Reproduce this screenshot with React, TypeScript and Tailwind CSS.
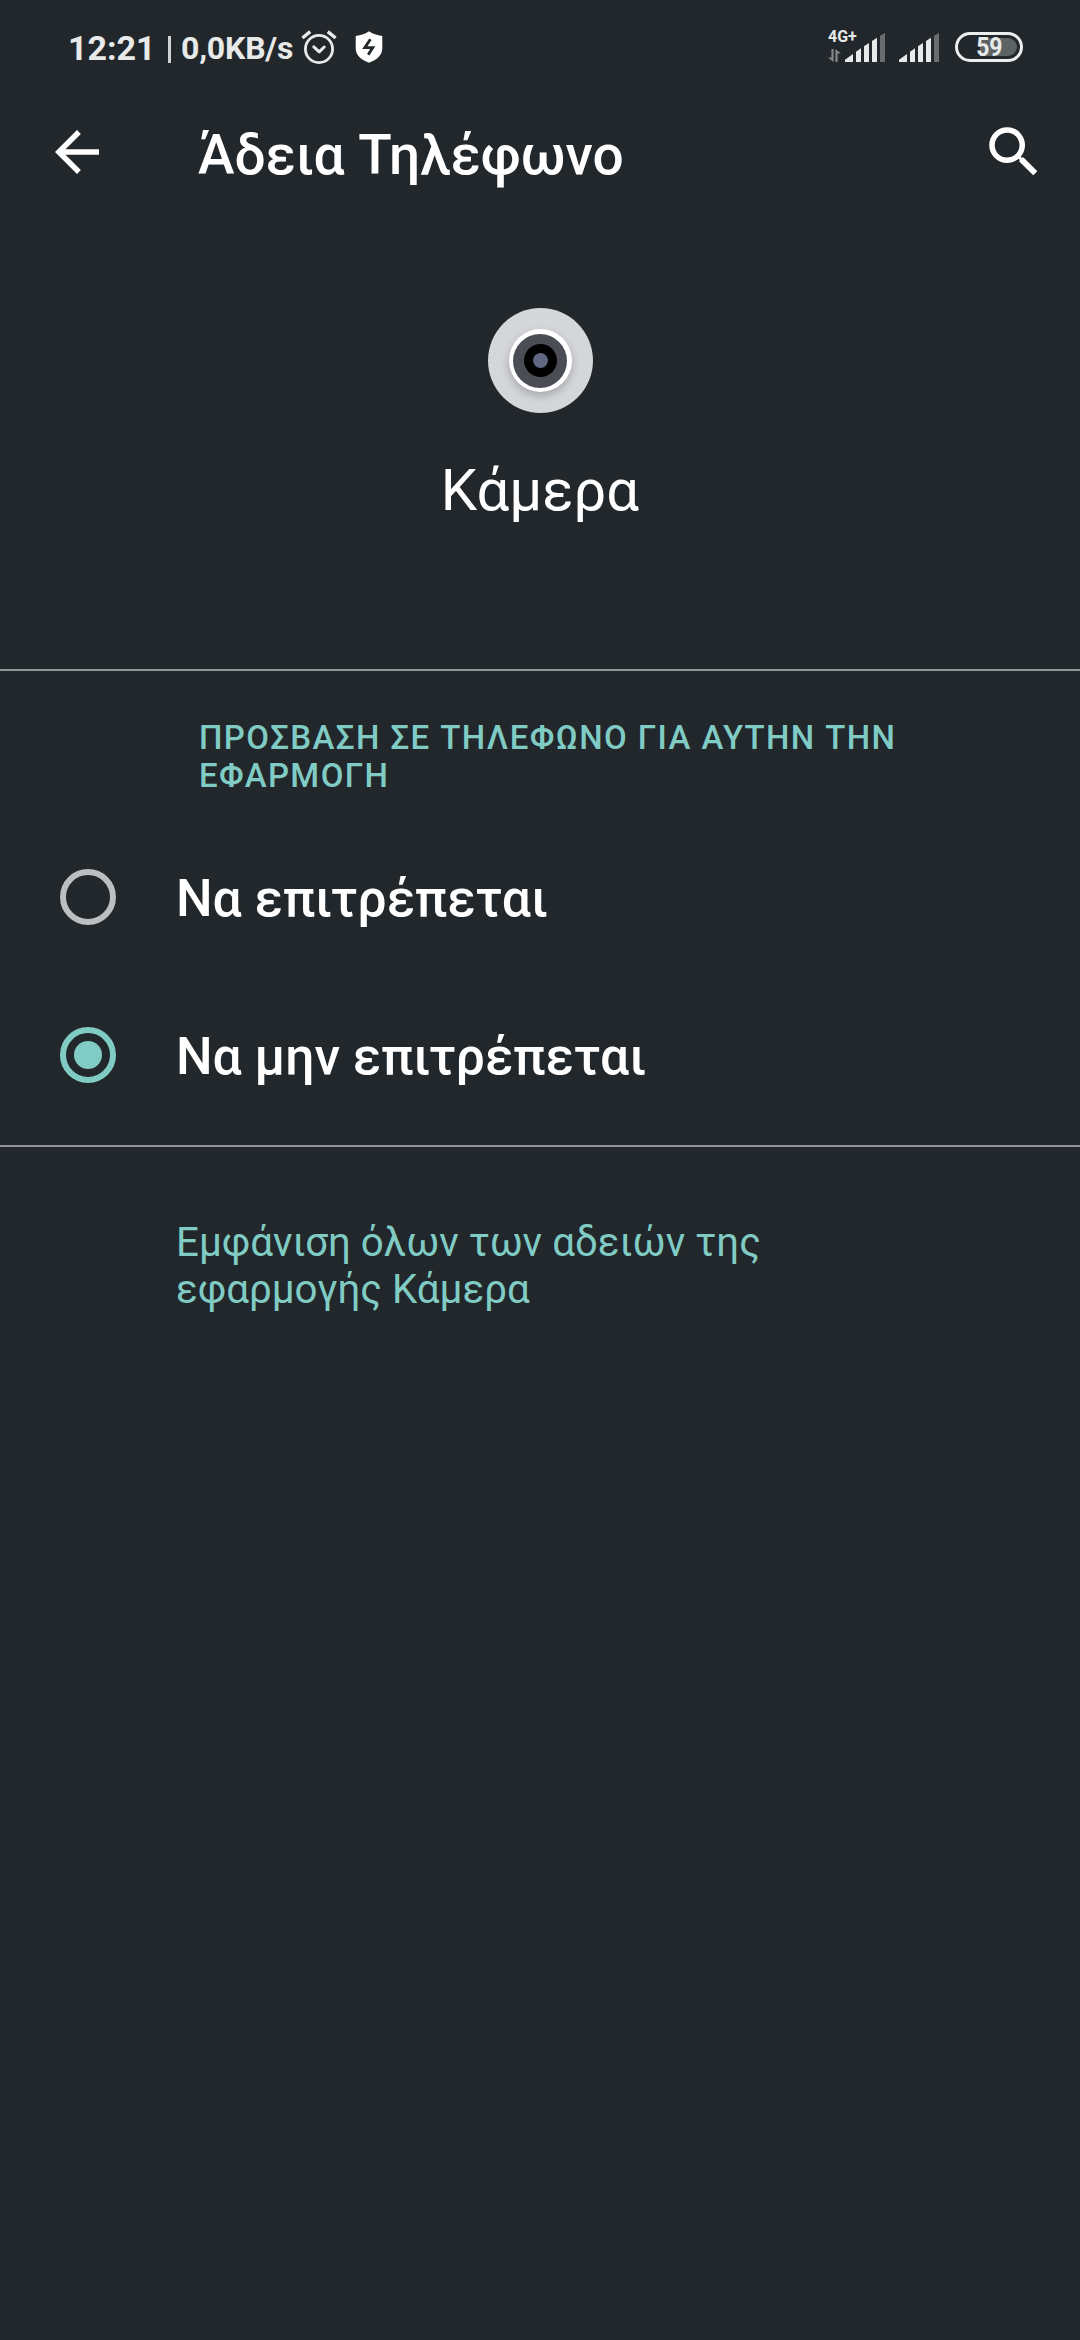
import { useState } from "react";
import { MdArrowBack, MdSearch } from "react-icons/md";

type SignalProps = {
  className?: string;
};

const options = [
  { id: "allow", label: "Να επιτρέπεται" },
  { id: "deny", label: "Να μην επιτρέπεται" },
];

const AlarmIcon = () => (
  <svg viewBox="0 0 36 36" className="h-9 w-9" fill="none" stroke="#e8eaea">
    <circle cx="18" cy="20" r="13.6" strokeWidth="2.8" />
    <path d="M12.8 17.8l5.4 5 5-4.8" strokeWidth="3" strokeLinecap="round" strokeLinejoin="round" />
    <path d="M1.4 9l7.8-6.4M34.6 9l-7.8-6.4" strokeWidth="3.4" />
  </svg>
);

const ShieldIcon = () => (
  <svg viewBox="0 0 28 32" className="h-8 w-7">
    <path d="M14 0.3c3.6 2.4 7.8 4 13.3 4.6v12.4c0 7-5.3 11.5-13.3 14.4C6 28.8 0.7 24.3 0.7 17.3V4.9C6.2 4.3 10.4 2.7 14 0.3z" fill="#fff" />
    <path d="M15.4 8.2L9.8 16.6h8L13.2 23.8" fill="none" stroke="#22272b" strokeWidth="2.8" />
  </svg>
);

const Signal = ({ className }: SignalProps) => (
  <svg viewBox="0 0 120 87" className={className}>
    <g fill="#e8eaea">
      <path d="M0 87V80L24 63V87z" />
      <path d="M33 87V56L48 46V87z" />
      <path d="M57 87V40L72 30V87z" />
      <path d="M81 87V24L96 14V87z" />
    </g>
    <path d="M105 87V8L120 0V87z" fill="#696d70" />
  </svg>
);

const StatusBar = () => (
  <div className="flex h-[95px] items-center pb-px pl-[68px] pr-[57px] text-[#e8eaea]">
    <div className="flex items-center font-bold">
      <span className="w-[100px] pt-[2px] text-[34px] leading-[48px]">12:21</span>
      <span className="mr-[10px] mt-[5px] h-[27px] w-[3px] bg-[#d0d2d3]" />
      <span className="w-[120px] whitespace-nowrap pt-[2px] text-[32px] leading-[48px] tracking-[-0.2px]">0,0KB/s</span>
    </div>
    <AlarmIcon />
    <div className="ml-[18px]">
      <ShieldIcon />
    </div>

    <div className="ml-auto flex items-center">
      <div className="flex h-[34px] w-[17px] flex-col">
        <span className="whitespace-nowrap text-[16px] font-bold leading-[13px]">4G+</span>
        <svg viewBox="0 0 13 13" className="mt-[6px] h-[13px] w-[13px]" fill="#85898b">
          <path d="M3.4 0H5.6V13L0 8.4H3.4z" />
          <path d="M7.4 13V0L13 4.6H9.6V13z" />
        </svg>
      </div>
      <Signal className="h-[29px] w-10" />
      <Signal className="ml-[14px] h-[29px] w-10" />
      <div className="relative ml-4 flex h-[30px] w-[68px] items-center justify-center rounded-full border-[3px] border-[#eceeee]">
        <span className="absolute right-[3px] h-[18px] w-[37px] rounded-r-full bg-[#5d6265]" />
        <span className="relative scale-x-[0.92] text-[25px] font-bold leading-none">59</span>
      </div>
    </div>
  </div>
);

const CameraIcon = () => (
  <div className="flex h-[105px] w-[105px] items-center justify-center rounded-full bg-[#d4d6da]">
    <div className="flex h-[63px] w-[63px] items-center justify-center rounded-full bg-white shadow-[0_4px_8px_rgba(0,0,0,0.22)]">
      <div className="flex h-[54px] w-[54px] items-center justify-center rounded-full bg-[#4b4d54]">
        <div className="flex h-[33px] w-[33px] items-center justify-center rounded-full bg-black">
          <div className="h-[15px] w-[15px] rounded-full bg-[#5f6680]" />
        </div>
      </div>
    </div>
  </div>
);

const App = () => {
  const [selected, setSelected] = useState("deny");

  return (
    <main className="min-h-[2340px] w-full bg-[#22272b] font-['Roboto',sans-serif] text-white">
      <StatusBar />

      {/* TOOLBAR */}
      <header className="flex h-[114px] items-center pl-11 pr-[33px]">
        <button type="button" aria-label="Πίσω">
          <MdArrowBack size={66} />
        </button>
        <h1 className="ml-[88px] pt-[6px] text-[55px] font-medium leading-[64px]">Άδεια Τηλέφωνο</h1>
        <button type="button" aria-label="Αναζήτηση" className="ml-auto">
          <MdSearch size={66} />
        </button>
      </header>

      {/* APP */}
      <section className="flex h-[462px] flex-col items-center border-b-2 border-[#919698] pt-[99px]">
        <CameraIcon />
        <h2 className="mt-[43px] text-[58px] leading-[68px]">Κάμερα</h2>
      </section>

      {/* PERMISSION */}
      <section className="h-[476px] border-b-2 border-[#929399] pt-[48px]">
        <h3 className="ml-[199px] w-[730px] text-[33px] font-medium leading-[38px] tracking-[1.4px] text-[#80cbc4]">
          ΠΡΟΣΒΑΣΗ ΣΕ ΤΗΛΕΦΩΝΟ ΓΙΑ ΑΥΤΗΝ ΤΗΝ ΕΦΑΡΜΟΓΗ
        </h3>
        <div className="mt-[23px]" role="radiogroup">
          {options.map((option) => {
            const checked = option.id === selected;

            return (
              <button
                key={option.id}
                type="button"
                role="radio"
                aria-checked={checked}
                onClick={() => setSelected(option.id)}
                className="flex h-[158px] w-full items-center pl-[60px] text-left"
              >
                <span
                  className={`flex h-14 w-14 items-center justify-center rounded-full border-[6px] ${
                    checked ? "border-[#80cbc4]" : "border-[#bdbec0]"
                  }`}
                >
                  {checked && <span className="h-7 w-7 rounded-full bg-[#80cbc4]" />}
                </span>
                <span className="ml-[60px] pt-1 text-[51.6px] font-medium leading-[60px]">{option.label}</span>
              </button>
            );
          })}
        </div>
      </section>

      <a href="#permissions" className="ml-[176px] mt-[72px] block w-[640px] text-[40.3px] leading-[47px] text-[#80cbc4]">
        Εμφάνιση όλων των αδειών της εφαρμογής Κάμερα
      </a>
    </main>
  );
};

export default App;
